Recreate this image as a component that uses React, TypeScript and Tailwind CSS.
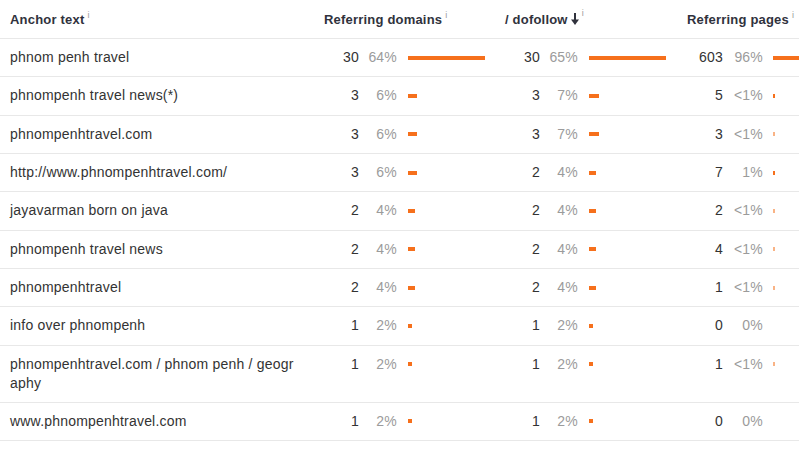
import React from "react";

type Metric = { n: string; p: string; w: number; light?: boolean };
type Row = { text: string; d: Metric; f: Metric; r: Metric };

const rows: Row[] = [
  { text: "phnom penh travel", d: { n: "30", p: "64%", w: 77 }, f: { n: "30", p: "65%", w: 77 }, r: { n: "603", p: "96%", w: 77 } },
  { text: "phnompenh travel news(*)", d: { n: "3", p: "6%", w: 9 }, f: { n: "3", p: "7%", w: 10 }, r: { n: "5", p: "<1%", w: 2 } },
  { text: "phnompenhtravel.com", d: { n: "3", p: "6%", w: 9 }, f: { n: "3", p: "7%", w: 10 }, r: { n: "3", p: "<1%", w: 2, light: true } },
  { text: "http://www.phnompenhtravel.com/", d: { n: "3", p: "6%", w: 9 }, f: { n: "2", p: "4%", w: 7 }, r: { n: "7", p: "1%", w: 2 } },
  { text: "jayavarman born on java", d: { n: "2", p: "4%", w: 7 }, f: { n: "2", p: "4%", w: 7 }, r: { n: "2", p: "<1%", w: 2, light: true } },
  { text: "phnompenh travel news", d: { n: "2", p: "4%", w: 7 }, f: { n: "2", p: "4%", w: 7 }, r: { n: "4", p: "<1%", w: 2, light: true } },
  { text: "phnompenhtravel", d: { n: "2", p: "4%", w: 7 }, f: { n: "2", p: "4%", w: 7 }, r: { n: "1", p: "<1%", w: 2, light: true } },
  { text: "info over phnompenh", d: { n: "1", p: "2%", w: 4 }, f: { n: "1", p: "2%", w: 4 }, r: { n: "0", p: "0%", w: 0 } },
  { text: "phnompenhtravel.com / phnom penh / geography", d: { n: "1", p: "2%", w: 4 }, f: { n: "1", p: "2%", w: 4 }, r: { n: "1", p: "<1%", w: 2, light: true } },
  { text: "www.phnompenhtravel.com", d: { n: "1", p: "2%", w: 4 }, f: { n: "1", p: "2%", w: 4 }, r: { n: "0", p: "0%", w: 0 } },
];

function Info() {
  return (
    <span className="relative top-[-6px] ml-[3px] text-[9px] font-normal text-[#9a9a9a] leading-none">i</span>
  );
}

function Bar({ m, pl }: { m: Metric; pl: string }) {
  return (
    <div className={`${pl} py-[9.17px] overflow-hidden`}>
      <div className="h-[19px] flex items-center">
        {m.w > 0 && (
          <div
            className={m.light ? "h-[4px] bg-[#f9b385]" : "h-[4px] bg-[#f6701c]"}
            style={{ width: m.w }}
          />
        )}
      </div>
    </div>
  );
}

function Cells({ m, pl }: { m: Metric; pl: string }) {
  return (
    <>
      <div className="py-[9.17px] text-right text-[#333]">{m.n}</div>
      <div className="py-[9.17px] text-right text-[#9b9b9b] whitespace-nowrap">{m.p}</div>
      <Bar m={m} pl={pl} />
    </>
  );
}

export default function App() {
  return (
    <div
      className="w-[799px] h-[459px] bg-white overflow-hidden text-[14px] leading-[19px] tracking-[0.2px] text-[#333]"
      style={{ fontFamily: '"Liberation Sans", Arial, sans-serif' }}
    >
      <div className="grid grid-cols-[324px_181px_182px_1fr] h-[39px] items-center border-b border-[#e8e8e8] text-[13px] font-bold text-[#30323d]">
        <div className="pl-[10px] whitespace-nowrap">
          Anchor text<Info />
        </div>
        <div className="whitespace-nowrap">
          Referring domains<Info />
        </div>
        <div className="whitespace-nowrap flex items-center">
          <span>/ dofollow</span>
          <svg width="8" height="12" viewBox="0 0 8 12" className="ml-[3px]">
            <rect x="3" y="0" width="2" height="8" fill="#30323d" />
            <path d="M0 6.5 L8 6.5 L4 12 Z" fill="#30323d" />
          </svg>
          <Info />
        </div>
        <div className="whitespace-nowrap">
          Referring pages<Info />
        </div>
      </div>
      {rows.map((r, i) => (
        <div
          key={i}
          className="grid grid-cols-[310px_49px_38px_113px_30px_38px_112px_33px_40px_1fr] border-b border-[#e8e8e8]"
        >
          <div className="pl-[10px] pr-[10px] py-[9.17px] break-all">{r.text}</div>
          <Cells m={r.d} pl="pl-[11px]" />
          <Cells m={r.f} pl="pl-[11px]" />
          <Cells m={r.r} pl="pl-[10px]" />
        </div>
      ))}
    </div>
  );
}
